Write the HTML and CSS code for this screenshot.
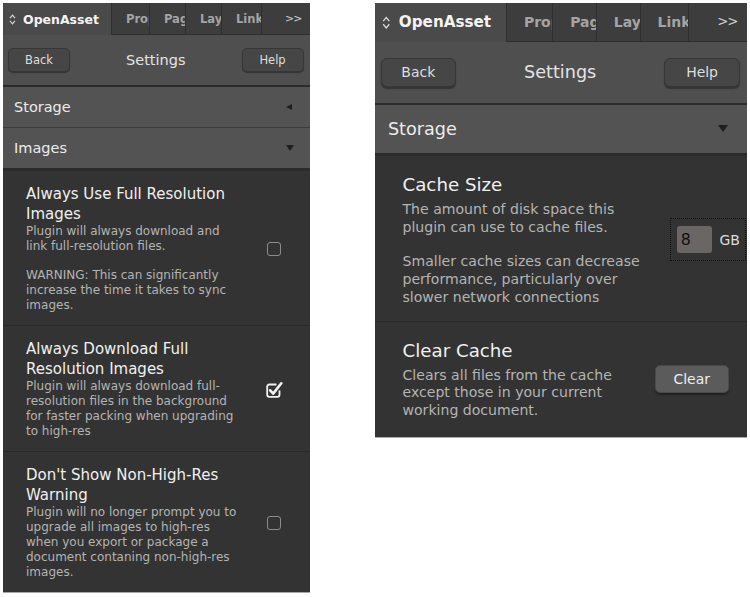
FILE: index.html
```html
<!DOCTYPE html>
<html lang="en">
<head>
    <meta charset="UTF-8">
    <meta name="viewport" content="width=device-width, initial-scale=1.0">
    <title>OpenAsset Settings</title>
    <link rel="stylesheet" href="styles.css">
</head>
<body>
<div class="page">

    <!-- Images settings -->
    <div class="panel">
        <div class="tabs">
            <div class="tab active">
                <svg class="tab-icon" width="7" height="11" viewBox="0 0 7 11">
                    <path d="M1 4.2L3.5 1.2L6 4.2M1 6.8L3.5 9.8L6 6.8" fill="none" stroke="#d8d8d8" stroke-width="1.1"/>
                </svg>
                <span>OpenAsset</span>
            </div>
            <div class="tab t1">Properties</div>
            <div class="tab t2">Pages</div>
            <div class="tab t3">Layers</div>
            <div class="tab t4">Links</div>
            <div class="tab more">&gt;&gt;</div>
        </div>
        <div class="toolbar">
            <button class="btn">Back</button>
            <div class="toolbar-title">Settings</div>
            <button class="btn">Help</button>
        </div>
        <div class="section-head">Storage <span class="arrow left"></span></div>
        <div class="section-head open">Images <span class="arrow down"></span></div>
        <div class="settings">
            <div class="setting">
                <div class="setting-text">
                    <h3>Always Use Full Resolution Images</h3>
                    <p>Plugin will always download and link full-resolution files.</p>
                    <p>WARNING: This can significantly increase the time it takes to sync images.</p>
                </div>
                <span class="checkbox"></span>
            </div>
            <div class="setting">
                <div class="setting-text">
                    <h3>Always Download Full Resolution Images</h3>
                    <p>Plugin will always download full-resolution files in the background for faster packing when upgrading to high-res</p>
                </div>
                <svg class="checked" width="18" height="17" viewBox="0 0 18 17">
                    <path d="M11.5 3.5H4.2a2 2 0 0 0-2 2v8.3a2 2 0 0 0 2 2h8.3a2 2 0 0 0 2-2V9.5" fill="none" stroke="#f2f2f2" stroke-width="1.8"/>
                    <path d="M5.2 9.3l3 3.3L16.3 2.3" fill="none" stroke="#f2f2f2" stroke-width="2.6" stroke-linecap="round" stroke-linejoin="round"/>
                </svg>
            </div>
            <div class="setting">
                <div class="setting-text">
                    <h3>Don't Show Non-High-Res Warning</h3>
                    <p>Plugin will no longer prompt you to upgrade all images to high-res when you export or package a document contaning non-high-res images.</p>
                </div>
                <span class="checkbox"></span>
            </div>
        </div>
    </div>

    <!-- Storage settings -->
    <div class="panel large">
        <div class="tabs">
            <div class="tab active">
                <svg class="tab-icon" width="7" height="11" viewBox="0 0 7 11">
                    <path d="M1 4.2L3.5 1.2L6 4.2M1 6.8L3.5 9.8L6 6.8" fill="none" stroke="#d8d8d8" stroke-width="1.1"/>
                </svg>
                <span>OpenAsset</span>
            </div>
            <div class="tab t1">Properties</div>
            <div class="tab t2">Pages</div>
            <div class="tab t3">Layers</div>
            <div class="tab t4">Links</div>
            <div class="tab more">&gt;&gt;</div>
        </div>
        <div class="toolbar">
            <button class="btn">Back</button>
            <div class="toolbar-title">Settings</div>
            <button class="btn">Help</button>
        </div>
        <div class="section-head open">Storage <span class="arrow down"></span></div>
        <div class="settings">
            <div class="setting cache">
                <div class="setting-text">
                    <h3>Cache Size</h3>
                    <p>The amount of disk space this plugin can use to cache files.</p>
                    <p>Smaller cache sizes can decrease performance, particularly over slower network connections</p>
                </div>
                <div class="size-field">
                    <input class="size-input" type="text" value="8">
                    <span class="size-unit">GB</span>
                </div>
            </div>
            <div class="setting clear">
                <div class="setting-text">
                    <h3>Clear Cache</h3>
                    <p>Clears all files from the cache except those in your current working document.</p>
                </div>
                <button class="btn clear-btn">Clear</button>
            </div>
        </div>
    </div>

</div>
</body>
</html>
```

FILE: styles.css
```css
body {
    margin: 0;
    background: #fff;
    font-family: "DejaVu Sans", Verdana, sans-serif;
}

.page {
    display: flex;
    align-items: flex-start;
    gap: 65px;
    padding: 3px;
}

.panel {
    width: 307px;
    background: #333;
    border-bottom: 1px solid #a8a8a8;
}

/* same panel, drawn bigger */
.panel.large {
    zoom: 1.215;
}

/* tab strip */
.tabs {
    display: flex;
    height: 32px;
    background: #3d3d3d;
}

.tab {
    display: flex;
    align-items: center;
    flex: none;
    box-sizing: border-box;
    overflow: hidden;
    white-space: nowrap;
    padding-left: 14px;
    border-right: 1px solid #2f2f2f;
    border-bottom: 1px solid #2f2f2f;
    font-size: 11.5px;
    font-weight: bold;
    color: #a4a4a4;
}

.tab.active {
    width: 109px;
    gap: 7px;
    padding-left: 6px;
    background: #4a4a4a;
    border-bottom: none;
    font-size: 12.5px;
    color: #f4f4f4;
}

.tab-icon {
    flex: none;
}

.t1 { width: 38px; }
.t2 { width: 36px; }
.t3 { width: 36px; }
.t4 { width: 40px; }

.tab.more {
    flex: 1;
    justify-content: flex-end;
    padding-right: 8px;
    border-right: none;
    font-weight: normal;
    font-size: 11px;
    letter-spacing: -1px;
    color: #d2d2d2;
}

/* back / title / help */
.toolbar {
    display: flex;
    align-items: center;
    justify-content: space-between;
    height: 50px;
    padding: 0 6px 0 5px;
    background: #4f4f4f;
    border-bottom: 2px solid #2b2b2b;
}

.toolbar-title {
    font-size: 14.5px;
    color: #e4e4e4;
}

.btn {
    width: 62px;
    height: 24px;
    padding: 0;
    font-family: "DejaVu Sans", Verdana, sans-serif;
    font-size: 11.5px;
    color: #dedede;
    background: #464646;
    border: 1px solid #373737;
    border-radius: 5px;
    box-shadow: 0 1px 1px rgba(0, 0, 0, 0.35);
}

/* collapsible group headers */
.section-head {
    display: flex;
    align-items: center;
    justify-content: space-between;
    height: 40px;
    padding: 0 16px 0 11px;
    background: #535353;
    border-bottom: 1px solid #3b3b3b;
    font-size: 14.5px;
    color: #ececec;
}

.section-head.open {
    border-bottom: 3px solid #2b2b2b;
}

.arrow {
    width: 0;
    height: 0;
}

.arrow.left {
    border-top: 3.5px solid transparent;
    border-bottom: 3.5px solid transparent;
    border-right: 6px solid #1f1f1f;
    margin-right: 2px;
}

.arrow.down {
    border-left: 4.5px solid transparent;
    border-right: 4.5px solid transparent;
    border-top: 6px solid #1f1f1f;
}

/* option rows */
.setting {
    display: flex;
    align-items: center;
    gap: 26px;
    padding: 13px 29px 12px 23px;
    border-top: 1px solid #2a2a2a;
}

.setting:first-child {
    border-top: none;
}

.setting-text {
    flex: 1;
    min-width: 0;
}

.setting h3 {
    margin: 0;
    font-size: 15px;
    font-weight: normal;
    line-height: 20px;
    color: #f0f0f0;
}

.setting p {
    margin: 0;
    font-size: 12px;
    line-height: 15px;
    color: #b4b4b4;
}

.setting p + p {
    margin-top: 14px;
}

.panel.large .setting {
    padding-top: 14px;
}

.panel.large .setting h3 {
    margin-bottom: 3px;
}

.panel.large .setting p {
    font-size: 11.6px;
    line-height: 14.5px;
}

.checkbox {
    flex: none;
    width: 12px;
    height: 12px;
    border: 1.5px solid #8c8c8c;
    border-radius: 3px;
}

.checked {
    flex: none;
    margin: 0 -2px 0 -1px;
}

.setting.cache {
    gap: 14px;
    padding-right: 1px;
}

.setting.clear {
    gap: 10px;
    padding-right: 15px;
    padding-bottom: 14px;
}

.size-field {
    display: flex;
    align-items: center;
    gap: 6px;
    padding: 6px 4px 6px 5px;
    border: 1px dotted #111;
}

.size-input {
    width: 29px;
    height: 22px;
    box-sizing: border-box;
    padding: 0 0 0 3px;
    border: none;
    border-radius: 2.5px;
    background: #6b6666;
    font-family: "DejaVu Sans", Verdana, sans-serif;
    font-size: 13px;
    color: #111;
}

.size-unit {
    font-size: 11.5px;
    color: #dedede;
}

.clear-btn {
    flex: none;
    width: 61px;
    height: 23px;
    background: #5b5b5b;
    border-color: #4a4a4a;
    border-radius: 4px;
    color: #eeeeee;
}
```
